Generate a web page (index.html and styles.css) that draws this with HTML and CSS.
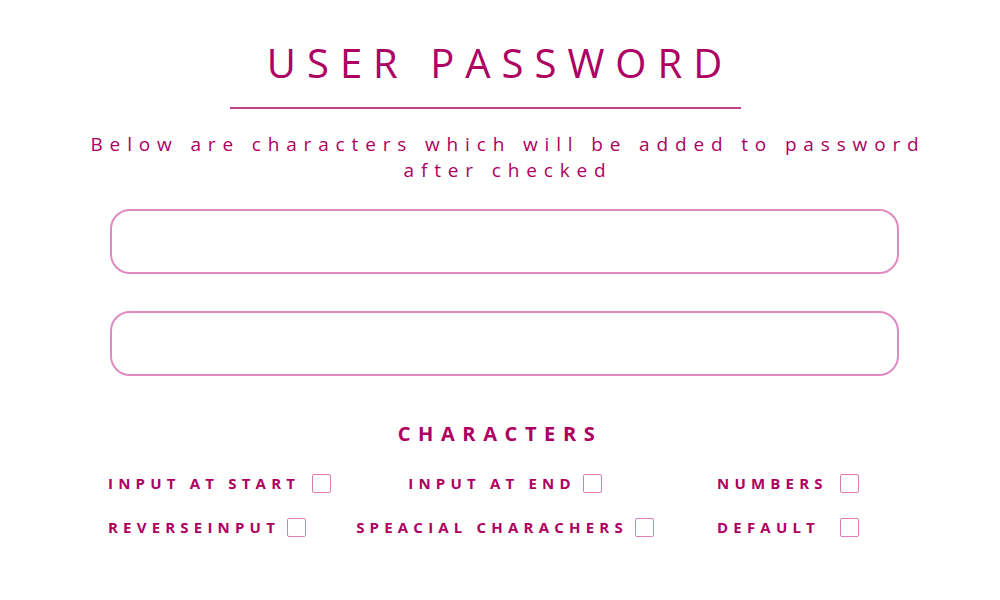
FILE: index.html
```html
<!DOCTYPE html>
<html>
<head>
<meta charset="utf-8">
<link rel="stylesheet" href="styles.css">
</head>
<body>
<main class="page">
  <h1 class="title">USER PASSWORD</h1>
  <hr class="rule">
  <p class="subtitle">Below are characters which will be added to password after checked</p>
  <div class="fields">
    <input class="field" type="text">
    <input class="field" type="text">
  </div>
  <h2 class="section">CHARACTERS</h2>
  <div class="options">
    <label class="opt opt-left"><span class="lbl">INPUT AT START</span><span class="box box-wide"></span></label>
    <label class="opt opt-center"><span class="lbl">INPUT AT END</span><span class="box"></span></label>
    <label class="opt opt-right"><span class="lbl">NUMBERS</span><span class="box"></span></label>
    <label class="opt opt-left"><span class="lbl">REVERSEINPUT</span><span class="box"></span></label>
    <label class="opt opt-center"><span class="lbl">SPEACIAL CHARACHERS</span><span class="box"></span></label>
    <label class="opt opt-right"><span class="lbl">DEFAULT</span><span class="box"></span></label>
  </div>
</main>
</body>
</html>
```

FILE: styles.css
```css
html, body {
  margin: 0;
  padding: 0;
  background: #ffffff;
}
body {
  font-family: "Open Sans", "Liberation Sans", sans-serif;
  color: #ad0062;
}
.page {
  width: 1000px;
  height: 600px;
  display: flex;
  flex-direction: column;
  align-items: center;
  box-sizing: border-box;
  padding-top: 36px;
}
.title {
  margin: 0;
  font-size: 40px;
  font-weight: 400;
  letter-spacing: 11px;
  line-height: 54px;
  padding-left: 0;
}
.rule {
  width: 511px;
  height: 0;
  border: none;
  border-top: 2px solid #c4418f;
  margin: 17px 0 0 -29px;
}
.subtitle {
  margin: 22px 0 0 0;
  width: 860px;
  text-align: center;
  font-size: 19px;
  line-height: 26px;
  letter-spacing: 6.85px;
  padding-left: 16px;
}
.fields {
  margin-top: 26px;
  display: flex;
  flex-direction: column;
  gap: 37px;
  padding-left: 8px;
}
.field {
  display: block;
  width: 789px;
  height: 65px;
  box-sizing: border-box;
  border: 2px solid #e08bc0;
  border-radius: 20px;
  background: #fff;
  outline: none;
}
.section {
  margin: 44px 0 0 0;
  font-size: 20px;
  font-weight: 700;
  letter-spacing: 7.6px;
  line-height: 28px;
  padding-left: 0;
}
.options {
  margin-top: 25px;
  width: 1000px;
  display: grid;
  grid-template-columns: 300px 410px 290px;
  row-gap: 24px;
  align-items: center;
}
.opt {
  display: flex;
  align-items: center;
  font-size: 15px;
  font-weight: 700;
  letter-spacing: 5.2px;
  line-height: 20px;
  white-space: pre;
}
.opt-left {
  padding-left: 108px;
}
.opt-center {
  justify-self: center;
}
.opt-right {
  padding-left: 7px;
}
.opt-right .lbl {
  width: 123px;
}
.box {
  display: inline-block;
  flex-shrink: 0;
  width: 19px;
  height: 19px;
  box-sizing: border-box;
  border: 1.5px solid #d97db4;
  border-radius: 2px;
  margin-left: 7px;
}
.box-wide {
  margin-left: 12px;
}
.opt-right .box {
  margin-left: 0;
}
```
